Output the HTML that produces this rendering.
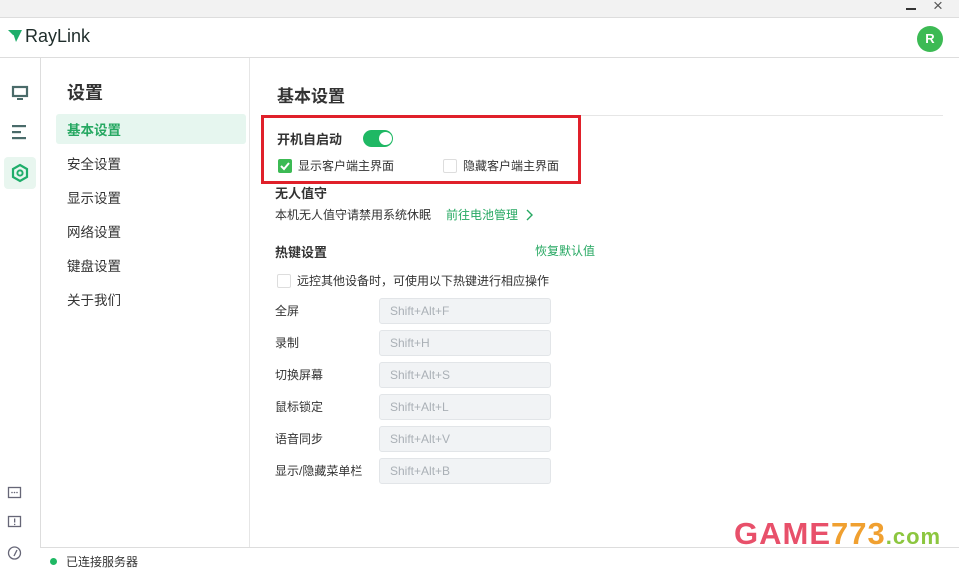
<!DOCTYPE html>
<html><head><meta charset="utf-8"><style>
*{margin:0;padding:0;box-sizing:border-box}
body{width:959px;height:564px;overflow:hidden;background:#fff;font-family:"Liberation Sans","Noto Sans CJK SC",sans-serif;color:#222;position:relative;font-size:13px}
.a{position:absolute}
.t{white-space:nowrap}
.inp{position:absolute;left:379px;width:172px;height:26px;background:#f1f3f5;border:1px solid #e2e5e8;border-radius:3px;color:#aab0b6;font-size:12px;padding-left:10px;line-height:24px}
.lab{position:absolute;left:275px;font-size:12px;color:#333}
.nav{position:absolute;left:67px;font-size:13.5px;color:#333}
</style></head><body>
<div class="a" style="left:0;top:0;width:959px;height:18px;background:#f2f2f2;border-bottom:1px solid #ddd"></div>
<div class="a" style="left:906px;top:8px;width:10px;height:2px;background:#333"></div>
<div class="a t" style="left:933px;top:-4px;font-size:17px;color:#555">×</div>
<svg class="a" style="left:7px;top:29px" width="16" height="14" viewBox="0 0 16 14"><path d="M1 1H15L9 13L7 7Z" fill="#1fae6b"/><path d="M1 7L7 7" stroke="#fff" stroke-width="1.5"/></svg>
<div class="a t" style="left:25px;top:26px;font-size:18px;color:#1f2d2b">RayLink</div>
<div class="a" style="left:917px;top:26px;width:26px;height:26px;border-radius:50%;background:#3cba54;color:#fff;font-weight:bold;text-align:center;line-height:26px;font-size:13px">R</div>
<div class="a" style="left:0;top:57px;width:959px;height:1px;background:#ddd"></div>
<div class="a" style="left:40px;top:58px;width:1px;height:490px;background:#ddd"></div>
<div class="a" style="left:249px;top:58px;width:1px;height:490px;background:#e6e6e6"></div>
<div class="a" style="left:40px;top:547px;width:919px;height:1px;background:#ddd"></div>
<svg class="a" style="left:11px;top:85px" width="18" height="16"><rect x="2" y="2" width="14" height="9" fill="none" stroke="#4a6b6a" stroke-width="2.2"/><rect x="6" y="13" width="6" height="2" fill="#4a6b6a"/></svg>
<svg class="a" style="left:11px;top:124px" width="18" height="16"><rect x="1" y="1" width="14" height="2.2" fill="#4a6b6a"/><rect x="1" y="7" width="9" height="2.2" fill="#4a6b6a"/><rect x="1" y="13" width="14" height="2.2" fill="#4a6b6a"/></svg>
<div class="a" style="left:4px;top:157px;width:32px;height:32px;background:#e8f6ef;border-radius:4px"></div>
<svg class="a" style="left:10px;top:163px" width="20" height="20" viewBox="0 0 20 20"><path d="M10 2L17 6V14L10 18L3 14V6Z" fill="none" stroke="#1fae6b" stroke-width="2.2"/><circle cx="10" cy="10" r="2.6" fill="none" stroke="#1fae6b" stroke-width="2"/></svg>
<svg class="a" style="left:7px;top:486px" width="16" height="16"><rect x="1.5" y="1.5" width="12" height="10" fill="none" stroke="#667" stroke-width="1.3"/><circle cx="5" cy="6.5" r=".8" fill="#667"/><circle cx="7.5" cy="6.5" r=".8" fill="#667"/><circle cx="10" cy="6.5" r=".8" fill="#667"/></svg>
<svg class="a" style="left:7px;top:515px" width="16" height="16"><rect x="1.5" y="1.5" width="12" height="10" fill="none" stroke="#667" stroke-width="1.3"/><rect x="7" y="3.5" width="1.3" height="4" fill="#667"/><rect x="7" y="8.8" width="1.3" height="1.3" fill="#667"/></svg>
<svg class="a" style="left:7px;top:545px" width="16" height="16"><circle cx="7.5" cy="8" r="6" fill="none" stroke="#667" stroke-width="1.3"/><path d="M10 5L7 11" stroke="#667" stroke-width="1.3"/></svg>
<div class="a t" style="left:67px;top:79px;font-size:18px;font-weight:bold;color:#333">设置</div>
<div class="a" style="left:56px;top:114px;width:190px;height:30px;background:#e6f6ef;border-radius:3px"></div>
<div class="nav t" style="top:119px;color:#26a862;font-weight:bold">基本设置</div>
<div class="nav t" style="top:153px">安全设置</div>
<div class="nav t" style="top:187px">显示设置</div>
<div class="nav t" style="top:221px">网络设置</div>
<div class="nav t" style="top:255px">键盘设置</div>
<div class="nav t" style="top:289px">关于我们</div>
<div class="a t" style="left:277px;top:82px;font-size:17px;font-weight:bold;color:#333">基本设置</div>
<div class="a" style="left:277px;top:115px;width:666px;height:1px;background:#e6e6e6"></div>
<div class="a" style="left:261px;top:115px;width:320px;height:69px;border:3px solid #e0202a"></div>
<div class="a t" style="left:277px;top:129px;font-size:13px;font-weight:bold;color:#333">开机自启动</div>
<div class="a" style="left:363px;top:130px;width:30px;height:17px;border-radius:9px;background:#1fb864"></div>
<div class="a" style="left:379px;top:132px;width:13px;height:13px;border-radius:50%;background:#fff"></div>
<div class="a" style="left:278px;top:159px;width:14px;height:14px;border-radius:2px;background:#3cba54"></div>
<svg class="a" style="left:278px;top:159px" width="14" height="14"><path d="M3 7L6 10L11 4" fill="none" stroke="#fff" stroke-width="2"/></svg>
<div class="a t" style="left:298px;top:157px;font-size:12px;color:#333">显示客户端主界面</div>
<div class="a" style="left:443px;top:159px;width:14px;height:14px;border:1px solid #ddd;border-radius:2px"></div>
<div class="a t" style="left:463px;top:157px;font-size:12px;color:#333">隐藏客户端主界面</div>
<div class="a t" style="left:275px;top:183px;font-size:13px;font-weight:bold;color:#333">无人值守</div>
<div class="a t" style="left:275px;top:206px;font-size:12px;color:#333">本机无人值守请禁用系统休眠</div>
<div class="a t" style="left:446px;top:206px;font-size:12px;color:#26a862">前往电池管理</div>
<svg class="a" style="left:525px;top:209px" width="10" height="12"><path d="M2 1L7 6L2 11" fill="none" stroke="#26a862" stroke-width="1.4"/></svg>
<div class="a t" style="left:275px;top:242px;font-size:13px;font-weight:bold;color:#333">热键设置</div>
<div class="a t" style="left:535px;top:242px;font-size:12px;color:#26a862">恢复默认值</div>
<div class="a" style="left:277px;top:274px;width:14px;height:14px;border:1px solid #ddd;border-radius:2px"></div>
<div class="a t" style="left:297px;top:272px;font-size:12px;color:#333">远控其他设备时，可使用以下热键进行相应操作</div>
<div class="lab t" style="top:302px">全屏</div><div class="inp" style="top:298px">Shift+Alt+F</div>
<div class="lab t" style="top:334px">录制</div><div class="inp" style="top:330px">Shift+H</div>
<div class="lab t" style="top:366px">切换屏幕</div><div class="inp" style="top:362px">Shift+Alt+S</div>
<div class="lab t" style="top:398px">鼠标锁定</div><div class="inp" style="top:394px">Shift+Alt+L</div>
<div class="lab t" style="top:430px">语音同步</div><div class="inp" style="top:426px">Shift+Alt+V</div>
<div class="lab t" style="top:462px">显示/隐藏菜单栏</div><div class="inp" style="top:458px">Shift+Alt+B</div>
<div class="a" style="left:50px;top:558px;width:7px;height:7px;border-radius:50%;background:#1fb864"></div>
<div class="a t" style="left:66px;top:553px;font-size:12px;color:#333">已连接服务器</div>
<div class="a t" style="left:734px;top:516px;font-size:31px;font-weight:bold;letter-spacing:1px"><span style="color:#e8506a">GAME</span><span style="color:#f0a030">773</span><span style="color:#8cc63f;font-size:22px">.com</span></div>
</body></html>
